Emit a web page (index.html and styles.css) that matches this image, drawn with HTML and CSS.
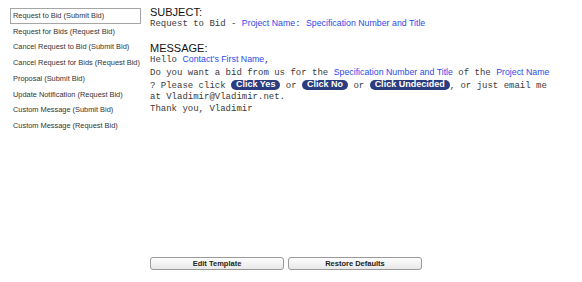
FILE: index.html
```html
<!DOCTYPE html>
<html lang="en">
<head>
  <meta charset="UTF-8">
  <title>Message Templates</title>
  <link rel="stylesheet" href="styles.css">
</head>
<body>
  <div class="page">
    <!-- lista de plantillas -->
    <ul class="templates">
      <li class="selected">Request to Bid (Submit Bid)</li>
      <li>Request for Bids (Request Bid)</li>
      <li>Cancel Request to Bid (Submit Bid)</li>
      <li>Cancel Request for Bids (Request Bid)</li>
      <li>Proposal (Submit Bid)</li>
      <li>Update Notification (Request Bid)</li>
      <li>Custom Message (Submit Bid)</li>
      <li>Custom Message (Request Bid)</li>
    </ul>

    <div class="preview">
      <h2>SUBJECT:</h2>
      <p class="subject">Request to Bid - <span class="field">Project Name</span>: <span class="field">Specification Number and Title</span></p>

      <h2 class="msg-title">MESSAGE:</h2>
      <p class="message">
        Hello <span class="field">Contact's First Name</span>,<br>
        Do you want a bid from us for the <span class="field">Specification Number and Title</span> of the <span class="field">Project Name</span> ? Please click <span class="pill">Click Yes</span> or <span class="pill">Click No</span> or <span class="pill">Click Undecided</span>, or just email me at Vladimir@Vladimir.net.<br>
        Thank you, Vladimir
      </p>

      <div class="actions">
        <button type="button">Edit Template</button>
        <button type="button">Restore Defaults</button>
      </div>
    </div>
  </div>
</body>
</html>
```

FILE: styles.css
```css
html, body {
  margin: 0;
  height: 100%;
  background: #fff;
}

body {
  font-family: "Liberation Sans", Arial, sans-serif;
  color: #333;
}

.page {
  display: flex;
  height: 100%;
}

.templates {
  list-style: none;
  margin: 8px 0 0 10px;
  padding: 0;
  width: 131px;
  font-size: 7.4px;
}

.templates li {
  line-height: 13.7px;
  padding-left: 2px;
  border: 1px solid transparent;
  white-space: nowrap;
  color: #333;
}

.templates li.selected {
  border-color: #a5a5a5;
}

.preview {
  display: flex;
  flex-direction: column;
  margin-left: 9px;
  padding-top: 6px;
  width: 408px;
}

h2 {
  margin: 0;
  font-size: 11px;
  font-weight: normal;
  line-height: 12px;
  color: #111;
}

.msg-title {
  margin-top: 13px;
  line-height: 11px;
}

.subject,
.message {
  margin: 0;
  font-family: "Liberation Mono", "Courier New", monospace;
  font-size: 9px;
  line-height: 11.8px;
  color: #3a3a3a;
}

.subject {
  line-height: 11px;
}

.field {
  font-family: "Liberation Sans", Arial, sans-serif;
  font-size: 8.8px;
  color: #2d4be8;
}

.pill {
  display: inline-block;
  padding: 0.5px 5px;
  line-height: 9px;
  border-radius: 6px;
  background-color: #2b3d7e;
  color: #fff;
  font-family: "Liberation Sans", Arial, sans-serif;
  font-size: 9px;
  font-weight: bold;
}

.actions {
  display: flex;
  gap: 4px;
  margin-top: auto;
  margin-bottom: 12px;
}

.actions button {
  width: 134px;
  height: 13px;
  padding: 0;
  border: 1px solid #9a9a9a;
  border-radius: 3px;
  background: linear-gradient(#fdfdfd, #e8e8e8);
  font-family: "Liberation Sans", Arial, sans-serif;
  font-size: 7.5px;
  font-weight: bold;
  color: #222;
}
```
